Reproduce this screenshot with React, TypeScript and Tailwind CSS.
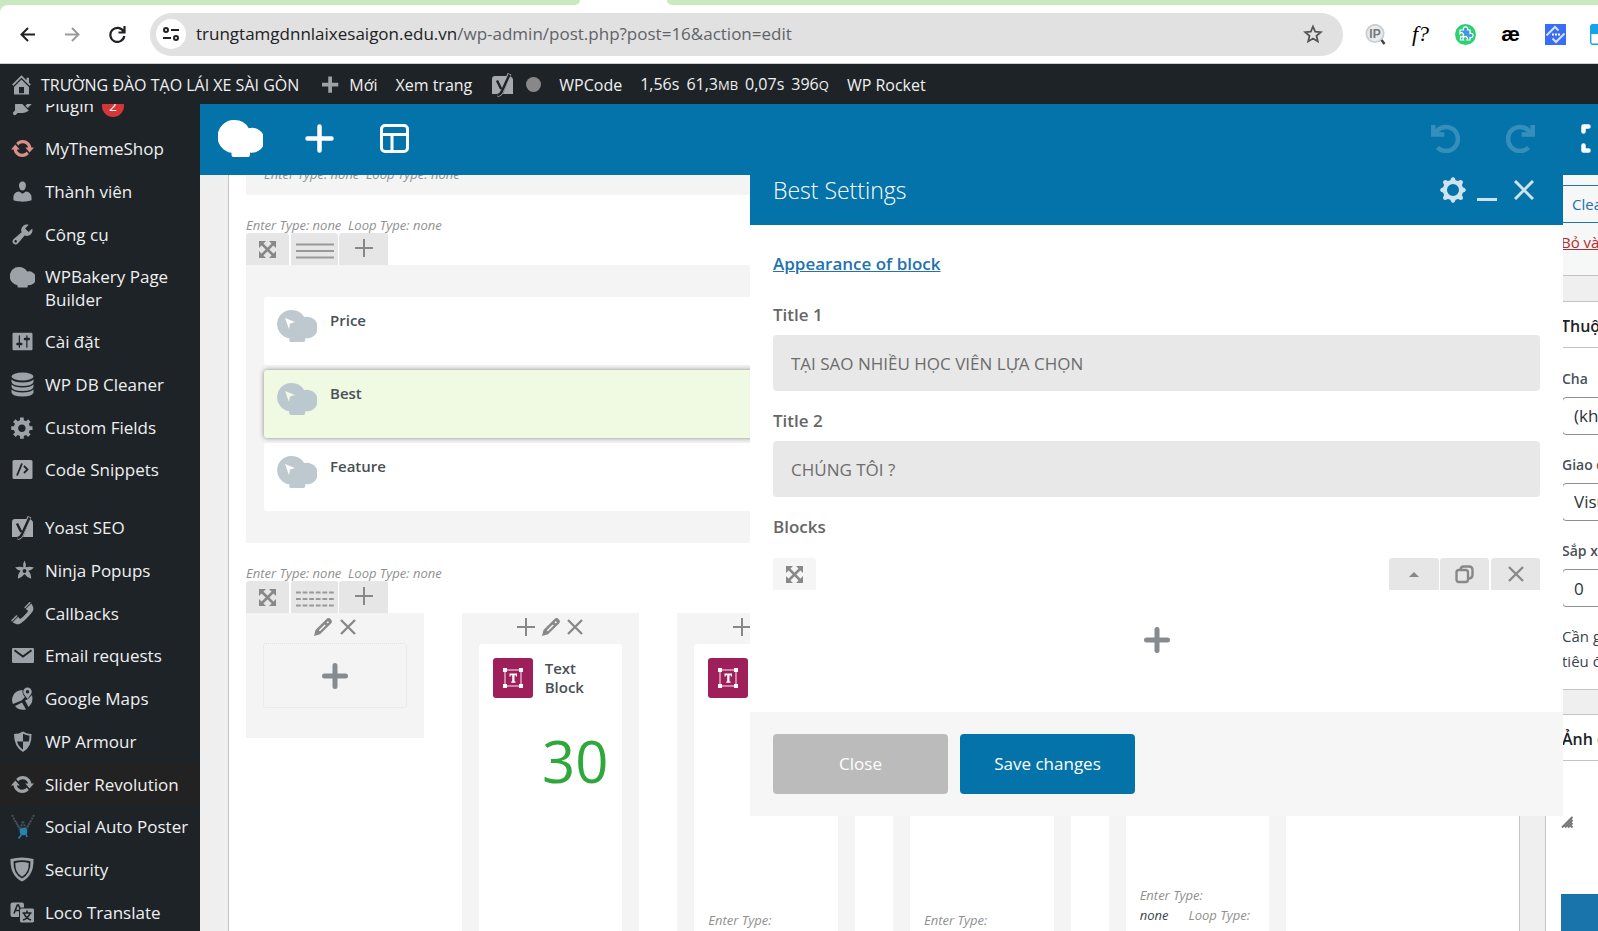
import type { ReactNode } from "react";

type IconProps = { className?: string };

const PATHS = {
  home: "M16 8.5l1.53 1.53-1.06 1.06L10 4.6l-6.47 6.49-1.06-1.06L10 2.5l4 4v-2h2v4zm-6-2.46l6 5.99V18H4v-5.97zM12 17v-5H8v5h4z",
  plus: "M17 8.500v3h-5v5H9v-5H4v-3h5v-5h3v5h5z",
  plugin:
    "M13.11 4.36L9.87 7.6 8 5.73l3.24-3.24c.35-.34 1.05-.2 1.56.32.52.51.66 1.21.31 1.55zm-8 1.77l.91-1.12 9.01 9.01-1.19.84c-.71.71-2.63 1.16-3.82 1.16H6.14L4.9 17.26c-.59.59-1.54.59-2.12 0-.59-.58-.59-1.53 0-2.12l1.24-1.24v-3.88c0-1.13.4-3.19 1.09-3.89zm7.26 3.97l3.24-3.24c.34-.35 1.04-.21 1.55.31.52.51.66 1.21.31 1.55l-3.24 3.25z",
  update:
    "M10.2 3.28c3.53 0 6.43 2.61 6.92 6h2.08l-3.5 4-3.5-4h2.32c-.45-1.97-2.21-3.45-4.32-3.45-1.45 0-2.73.71-3.54 1.78L4.95 5.66C6.23 4.2 8.11 3.28 10.2 3.28zm-.4 13.44c-3.52 0-6.43-2.61-6.92-6H.8l3.5-4c1.17 1.33 2.33 2.67 3.5 4H5.48c.45 1.97 2.21 3.45 4.32 3.45 1.45 0 2.73-.71 3.54-1.78l1.71 1.95c-1.28 1.46-3.15 2.38-5.25 2.38z",
  user: "M10 9.25c-2.27 0-2.73-3.44-2.73-3.44C7 4.02 7.82 2 9.97 2c2.16 0 2.98 2.02 2.71 3.81 0 0-.41 3.44-2.68 3.44zm0 2.57L12.72 10c2.39 0 4.52 2.33 4.52 4.53v2.49s-3.65 1.13-7.24 1.13c-3.65 0-7.24-1.13-7.24-1.13v-2.49c0-2.25 1.94-4.48 4.47-4.48z",
  wrench:
    "M16.68 9.77c-1.34 1.34-3.3 1.67-4.95.99l-5.41 6.52c-.99.99-2.59.99-3.58 0s-.99-2.59 0-3.57l6.52-5.42c-.68-1.65-.35-3.61.99-4.95 1.28-1.28 3.12-1.62 4.72-1.06l-2.89 2.89 2.82 2.82 2.86-2.87c.53 1.58.18 3.39-1.08 4.65zM3.81 16.21c.4.39 1.04.39 1.43 0 .4-.4.4-1.04 0-1.43-.39-.4-1.03-.4-1.43 0-.39.39-.39 1.03 0 1.43z",
  sliders:
    "M18 16V4c0-.55-.45-1-1-1H3c-.55 0-1 .45-1 1v12c0 .55.45 1 1 1h14c.55 0 1-.45 1-1zM8 11h1c.55 0 1 .45 1 1s-.45 1-1 1H8v1.5c0 .28-.22.5-.5.5s-.5-.22-.5-.5V13H6c-.55 0-1-.45-1-1s.45-1 1-1h1V5.5c0-.28.22-.5.5-.5s.5.22.5.5V11zm5-2h-1c-.55 0-1-.45-1-1s.45-1 1-1h1V5.5c0-.28.22-.5.5-.5s.5.22.5.5V7h1c.55 0 1 .45 1 1s-.45 1-1 1h-1v5.5c0 .28-.22.5-.5.5s-.5-.22-.5-.5V9z",
  gear: "M18 12h-2.18c-.17.7-.44 1.35-.81 1.93l1.54 1.54-2.1 2.1-1.54-1.54c-.58.36-1.23.63-1.91.79V19H8v-2.18c-.68-.16-1.33-.43-1.91-.79l-1.54 1.54-2.12-2.12 1.54-1.54c-.36-.58-.63-1.23-.79-1.91H1V9.03h2.17c.16-.7.44-1.35.8-1.94L2.43 5.55l2.1-2.1 1.54 1.54c.58-.37 1.24-.64 1.93-.81V2h3v2.18c.68.16 1.33.43 1.91.79l1.54-1.54 2.12 2.12-1.54 1.54c.36.59.64 1.24.8 1.94H18V12zm-8.5 1.5c1.66 0 3-1.34 3-3s-1.34-3-3-3-3 1.34-3 3 1.34 3 3 3z",
  phone:
    "M12.06 6l-.21-.2c-.52-.54-.43-.79.08-1.3l2.72-2.75c.81-.82.96-1.21 1.73-.48l.21.2zm.53.45l4.4-4.4c.7.94 2.34 3.47 1.53 5.34-.73 1.67-1.09 1.75-2 3-1.85 2.11-4.18 4.37-6 6.07-1.26.91-1.31 1.33-3 2-1.8.71-4.4-.89-5.38-1.56l4.4-4.4 1.18 1.62c.34.46 1.2-.06 1.8-.66 1.04-1.05 3.18-3.18 4-4.07.59-.59 1.12-1.45.66-1.8zM1.57 16.5l-.21-.21c-.68-.74-.29-.9.52-1.7l2.74-2.72c.51-.49.75-.6 1.27-.11l.2.21z",
};

const Dash = ({ name, className = "size-[25px]" }: { name: keyof typeof PATHS; className?: string }) => (
  <svg viewBox="0 0 20 20" className={className} fill="currentColor" aria-hidden="true">
    <path fillRule="evenodd" d={PATHS[name]} />
  </svg>
);

const Clouds = ({ className }: IconProps) => (
  <svg viewBox="0 0 45 37" className={className} fill="currentColor" aria-hidden="true">
    <path d="M16.500 0a16.500 16.500 0 0 1 14.300 8.200A12.500 12.500 0 1 1 32 32.600v2.400a2 2 0 0 1-2 2H15.500a2 2 0 0 1-2-2v-2.200A16.500 16.500 0 0 1 16.500 0z" />
  </svg>
);

const YoastIcon = ({ className = "size-[25px]" }: IconProps) => (
  <svg viewBox="0 0 25 25" className={className} aria-hidden="true">
    <path d="M5 4h12l-6 18H2V7a3 3 0 0 1 3-3zM20 4.500q3 .5 3 3.500v14H13z" fill="#a7aaad" />
    <path d="M7 8.500l4.200 8.500M19.500 1.800L12 19q-1.500 3.800-4.500 4" fill="none" stroke="#a7aaad" strokeWidth="4" />
    <path d="M7 8.500l4.200 8.500M19.500 2.500L12 19q-1.500 3.800-4.500 4" fill="none" stroke="#1d2327" strokeWidth="2.400" />
  </svg>
);

const DatabaseIcon = () => (
  <svg viewBox="0 0 25 25" className="size-[25px]" fill="currentColor" aria-hidden="true">
    <ellipse cx="12.500" cy="4.500" rx="11" ry="4" />
    <path d="M1.500 7.500q3 3 11 3t11-3v2.500q-1 4-11 4t-11-4z" />
    <path d="M1.500 12.500q3 3 11 3t11-3V15q-1 4-11 4t-11-4z" />
    <path d="M1.500 17.500q3 3 11 3t11-3v3q-1 4-11 4t-11-4z" />
  </svg>
);

const CodeIcon = () => (
  <svg viewBox="0 0 25 25" className="size-[25px]" aria-hidden="true">
    <rect x="2.500" y="3" width="20" height="19" rx="1.500" fill="#a7aaad" />
    <path d="M12 6.500L7 18.500M14 9l3.500 3.500L14 16" fill="none" stroke="#1d2327" strokeWidth="1.800" />
  </svg>
);

const NinjaStar = () => (
  <svg viewBox="0 0 25 25" className="size-[25px]" fill="currentColor" aria-hidden="true">
    <path
      fillRule="evenodd"
      d="M14.500 2.500q2 3.500 1.200 6.800Q19.500 8 24 9.500q-2.500 2.700-5.800 3.300 3 2.700 3 8-4.500-1.600-6.700-4.800-2.200 3.200-6.700 4.800 0-5.300 3-8Q7.500 12.200 5 9.500q4.500-1.500 8.300-.2Q12.500 6 14.500 2.500zm0 8.600a1.900 1.900 0 1 0 .01 3.800 1.900 1.900 0 0 0-.01-3.800z"
    />
  </svg>
);

const MailIcon = () => (
  <svg viewBox="0 0 25 25" className="size-[25px]" aria-hidden="true">
    <rect x="2" y="5" width="22" height="15" rx="1.200" fill="#9ca2a7" />
    <path d="M4.500 7.200l8.500 6.300 8.500-6.300" fill="none" stroke="#1d2327" strokeWidth="2" />
  </svg>
);

const MapsIcon = () => (
  <svg viewBox="0 0 25 25" className="size-[25px]" fill="currentColor" aria-hidden="true">
    <path d="M3 10q2-5.500 9.500-6-.5 4 2.500 7l-3.500 3.500L3 18q-2-4 0-8zM5 20l7-3.500 4 7q-7 1.500-11-3.500zM15 14.500l3-1.500 4-4q2 7-3.500 12z" />
    <path fillRule="evenodd" d="M17.500 1.500a4.300 4.300 0 0 1 4.300 4.300c0 2.500-2.500 4.500-4.300 7.200-1.800-2.700-4.300-4.700-4.300-7.200a4.300 4.300 0 0 1 4.300-4.300zm0 2.600a1.700 1.700 0 1 0 .01 3.400 1.700 1.700 0 0 0-.01-3.400z" />
  </svg>
);

const ArmourIcon = () => (
  <svg viewBox="0 0 25 25" className="size-[25px]" aria-hidden="true">
    <path d="M13 2.500q4 2.500 8.500 2.500.5 13-8.500 18Q4 18 4 5q5 0 9-2.500z" fill="#9ca2a7" />
    <path d="M13 4.800q3 1.700 6.500 2 0 3-.7 5.700H13zM13 12.500v8q-4.500-2.600-6-8z" fill="#1d2327" />
  </svg>
);

const SocialIcon = () => (
  <svg viewBox="0 0 25 25" className="size-[25px]" fill="none" aria-hidden="true">
    <path d="M2 1l8 15 3-9 3 9 8-15" stroke="#484f55" strokeWidth="2" strokeDasharray="2 1" />
    <path d="M6 8l5 8M20 8l-4 7" stroke="#3c4a54" strokeWidth="1.500" />
    <circle cx="13.500" cy="17.500" r="3.800" fill="#2783b0" />
    <path d="M8.500 24.500l3-4M16 20l1 3" stroke="#2783b0" strokeWidth="1.500" />
  </svg>
);

const ShieldIcon = () => (
  <svg viewBox="0 0 25 25" className="size-[25px]" aria-hidden="true">
    <path d="M.5 2Q12 -1 23.500 2 24 19 12 24.500 0 19 .5 2z" fill="#9ca2a7" />
    <path d="M3.500 4.300Q12 2 20.500 4.300 21 17 12 21.500 3 17 3.500 4.300z" fill="#1d2327" />
    <path d="M5.300 6Q12 4 18.700 6 19 16 12 19.700 5 16 5.300 6z" fill="#9ca2a7" />
  </svg>
);

const TranslateIcon = () => (
  <svg viewBox="0 0 25 25" className="size-[25px]" aria-hidden="true">
    <rect x=".5" y="2.500" width="13.500" height="14.500" rx="2" fill="#9ca2a7" />
    <path d="M4 13.500L7.300 5h1.200l2.500 6M5.300 10.500h4.500" fill="none" stroke="#1d2327" strokeWidth="1.600" />
    <rect x="9.500" y="8" width="15" height="15" rx="2" fill="#9ca2a7" stroke="#1d2327" />
    <path d="M17 10.500v2M12.500 13h9M14 13.500q2 5 7 6.500M20 13.500q-2 5-7 6.500" fill="none" stroke="#1d2327" strokeWidth="1.600" />
  </svg>
);

const MoveIcon = ({ className = "size-[17px]" }: IconProps) => (
  <svg viewBox="0 0 17 17" className={className} aria-hidden="true">
    <path d="M3 3l11 11M14 3L3 14" stroke="#888" strokeWidth="2.500" />
    <path d="M0 0h7L0 7zM17 0v7L10 0zM0 17v-7L7 17zM17 17h-7l7-7z" fill="#888" />
  </svg>
);

const ThinPlus = () => (
  <svg viewBox="0 0 18 18" className="size-[18px]" aria-hidden="true">
    <path d="M9 0v18M0 9h18" stroke="#888" strokeWidth="2" />
  </svg>
);

const ThinCross = ({ className = "size-[16px]" }: IconProps) => (
  <svg viewBox="0 0 16 16" className={className} aria-hidden="true">
    <path d="M1 1l14 14M15 1L1 15" stroke="currentColor" strokeWidth="2.300" />
  </svg>
);

const Pencil = () => (
  <svg viewBox="0 0 18 18" className="size-[18px]" aria-hidden="true">
    <path
      fillRule="evenodd"
      fill="#888"
      d="M0 18l1.500-6L12.300 1.200a2.500 2.500 0 0 1 4.500 4.500L6 16.200zM4.800 12.200l1.100 1.100 5.800-5.800-1.100-1.100zM12.600 4.400l1.100 1.100 1.300-1.300-1.100-1.100z"
    />
  </svg>
);

const BoldPlus = () => (
  <svg viewBox="0 0 26 26" className="size-[26px]" aria-hidden="true">
    <path d="M13 2.500v21M2.500 13h21" stroke="#858c91" strokeWidth="5" strokeLinecap="round" />
  </svg>
);

const TextBlockIcon = () => (
  <span className="flex size-[40px] shrink-0 items-center justify-center rounded-[3px] bg-[#9f1f5b]">
    <svg viewBox="0 0 20 20" className="size-[20px]" aria-hidden="true">
      <rect x="2" y="2" width="16" height="16" fill="none" stroke="#e0b3c8" strokeWidth="1.400" />
      <path d="M0 0h4v4H0zM16 0h4v4h-4zM0 16h4v4H0zM16 16h4v4h-4z" fill="#fff" />
      <path d="M6.500 5.500h7.500v3h-1.200V7.300h-1.300v6.200h1v1.200H8.200v-1.200h1V7.300H7.700v1.200H6.500z" fill="#fff" />
    </svg>
  </span>
);

function BrowserBar() {
  return (
    <div className="shrink-0 bg-[#cbe9be]">
      <div className="flex h-[5px] bg-white">
        <div className="w-[580px] rounded-br-[5px] bg-[#cbe9be]" />
        <div className="ml-[87px] flex-1 rounded-bl-[5px] bg-[#cbe9be]" />
      </div>
      <div className="flex h-[59px] items-center overflow-hidden rounded-tl-lg border-b border-[#d0d0d0] bg-white pl-5">
        <button aria-label="Back" className="text-[#202124]">
          <svg viewBox="0 0 15 15" className="size-[15px]" fill="none" stroke="currentColor" strokeWidth="2">
            <path d="M15 7.500H1.500M8 1L1.500 7.500 8 14" />
          </svg>
        </button>
        <button aria-label="Forward" className="ml-[30px] text-[#9b9b9b]">
          <svg viewBox="0 0 15 15" className="size-[15px]" fill="none" stroke="currentColor" strokeWidth="2">
            <path d="M0 7.500h13.500M7 1l6.500 6.500L7 14" />
          </svg>
        </button>
        <button aria-label="Reload" className="ml-[29px] text-[#202124]">
          <svg viewBox="0 0 17 17" className="size-[17px]" fill="none" stroke="currentColor" strokeWidth="2.200">
            <path d="M14.500 5.500A7 7 0 1 0 15.300 10M15.500 0v6.500H9.500" />
          </svg>
        </button>
        <div className="ml-6 flex h-[43px] flex-1 items-center rounded-full bg-[#e1e1e1] pl-[6px] pr-[20px]">
          <span className="flex size-[30px] items-center justify-center rounded-full bg-white">
            <svg viewBox="0 0 16 14" className="h-[14px] w-[16px]" fill="none" stroke="#202124" strokeWidth="2">
              <circle cx="3" cy="3" r="2" />
              <path d="M8 3h8M0 11h8" />
              <circle cx="13" cy="11" r="2" />
            </svg>
          </span>
          <span className="ml-[10px] flex-1 whitespace-nowrap text-[17px] leading-6 text-[#202124]">
            trungtamgdnnlaixesaigon.edu.vn<span className="text-[#5f6368]">/wp-admin/post.php?post=16&amp;action=edit</span>
          </span>
          <button aria-label="Bookmark">
            <svg viewBox="0 0 20 20" className="size-[20px]" fill="none" stroke="#555" strokeWidth="1.800">
              <path d="M10 2.500l2.200 5.200 5.600.5-4.300 3.700 1.300 5.500-4.800-2.900-4.800 2.900 1.300-5.500-4.300-3.700 5.600-.5z" />
            </svg>
          </button>
        </div>
        <div className="flex w-[255px] shrink-0 items-center gap-6 overflow-hidden pl-[22px]">
          <span className="flex size-[21px] shrink-0 items-center justify-center">
            <svg viewBox="0 0 21 21" className="size-[21px]">
              <circle cx="10" cy="9.500" r="8.700" fill="#e8eaeb" stroke="#c9ced2" strokeWidth="1.800" />
              <path d="M16.500 16l3 4" stroke="#444" strokeWidth="2.500" />
              <text x="10" y="14" textAnchor="middle" fontSize="12" fontWeight="700" fill="#777" fontFamily="Liberation Sans, sans-serif">
                IP
              </text>
            </svg>
          </span>
          <span className="w-[21px] shrink-0 whitespace-nowrap text-center font-['Liberation_Serif',serif] text-[22px] italic leading-6 text-black">
            f?
          </span>
          <svg viewBox="0 0 21 21" className="size-[21px] shrink-0">
            <circle cx="10.500" cy="10.500" r="10.500" fill="#2fd072" />
            <path
              d="M5 6h3.500a2.200 2.200 0 1 1 4 0H15v3.500a2.200 2.200 0 1 1 0 4V16h-3a2.200 2.200 0 1 0-3.500 0H5.500v-3.500a2 2 0 1 0-.5-3z"
              fill="#4196e0"
              stroke="#fff"
              strokeWidth="1.200"
            />
          </svg>
          <span className="w-[21px] shrink-0 text-center font-['Liberation_Sans',sans-serif] text-[21px] font-bold leading-6 text-black">æ</span>
          <svg viewBox="0 0 21 21" className="size-[21px] shrink-0">
            <rect width="21" height="21" fill="#3a6df5" />
            <path d="M1.500 11.500L10 3l3.500 3.500M19.500 9.500L11 18l-3.500-3.500" fill="none" stroke="#d5e2ff" strokeWidth="2" />
            <path d="M7 10.500h2M10 10.500h2M13 10.500h2" stroke="#fff" strokeWidth="1.800" />
          </svg>
          <svg viewBox="0 0 21 21" className="size-[21px] shrink-0">
            <rect x=".7" y=".7" width="19.600" height="19.600" rx="2" fill="#fff" stroke="#12a5ee" strokeWidth="1.400" />
            <path d="M1 1h19v9H1z" fill="#12a5ee" />
          </svg>
        </div>
      </div>
    </div>
  );
}

function AdminBar() {
  return (
    <header className="flex h-10 shrink-0 items-center whitespace-nowrap bg-[#1d2327] pl-[9px] pt-px text-[16px] leading-6 text-[#f0f0f1]">
      <a href="#home" className="flex items-center gap-[7px]">
        <Dash name="home" className="size-[25px] text-[#9ca2a7]" />
        TRƯỜNG ĐÀO TẠO LÁI XE SÀI GÒN
      </a>
      <a href="#new" className="ml-[18px] flex items-center gap-[7px]">
        <Dash name="plus" className="size-[25px] text-[#9ca2a7]" />
        Mới
      </a>
      <a href="#view" className="ml-[18px]">
        Xem trang
      </a>
      <a href="#yoast" aria-label="Yoast SEO" className="ml-[18px] flex items-center gap-[11px]">
        <YoastIcon />
        <span className="size-[15px] rounded-full bg-[#888]" />
      </a>
      <a href="#wpcode" className="ml-[18px]">
        WPCode
      </a>
      <a href="#stats" className="ml-[18px] flex items-baseline gap-[7px]">
        <span>1,56s</span>
        <span>
          61,3<span className="text-[13px]">MB</span>
        </span>
        <span>0,07s</span>
        <span>
          396<span className="text-[13px]">Q</span>
        </span>
      </a>
      <a href="#rocket" className="ml-[18px]">
        WP Rocket
      </a>
    </header>
  );
}

type MenuEntry = { label: ReactNode; icon: ReactNode; row?: string };

const MENU: MenuEntry[] = [
  {
    label: (
      <span className="flex items-center gap-2">
        Plugin
        <span className="flex size-[22px] items-center justify-center rounded-full bg-[#d63638] text-[14px] text-white">2</span>
      </span>
    ),
    icon: <Dash name="plugin" />,
  },
  {
    label: "MyThemeShop",
    icon: <Dash name="update" className="size-[25px] text-[#dc8f89]" />,
  },
  { label: "Thành viên", icon: <Dash name="user" /> },
  { label: "Công cụ", icon: <Dash name="wrench" /> },
  {
    label: (
      <>
        WPBakery Page
        <br />
        Builder
      </>
    ),
    icon: <Clouds className="mb-5 w-[25px]" />,
    row: "h-[65px]",
  },
  { label: "Cài đặt", icon: <Dash name="sliders" /> },
  { label: "WP DB Cleaner", icon: <DatabaseIcon /> },
  { label: "Custom Fields", icon: <Dash name="gear" /> },
  { label: "Code Snippets", icon: <CodeIcon />, row: "mb-[15px] h-[43px]" },
  { label: "Yoast SEO", icon: <YoastIcon /> },
  { label: "Ninja Popups", icon: <NinjaStar /> },
  { label: "Callbacks", icon: <Dash name="phone" /> },
  { label: "Email requests", icon: <MailIcon /> },
  { label: "Google Maps", icon: <MapsIcon /> },
  { label: "WP Armour", icon: <ArmourIcon /> },
  {
    label: "Slider Revolution",
    icon: <Dash name="update" />,
    row: "h-[42px] bg-[#222222]",
  },
  { label: "Social Auto Poster", icon: <SocialIcon /> },
  { label: "Security", icon: <ShieldIcon /> },
  { label: "Loco Translate", icon: <TranslateIcon /> },
];

function Sidebar() {
  return (
    <nav className="w-[200px] shrink-0 overflow-hidden bg-[#1d2327]">
      <ul className="-mt-5">
        {MENU.map((item, i) => (
          <li key={i} className={item.row ?? "h-[43px] nth-[4n]:h-[42px]"}>
            <a href="#menu" className="flex h-full items-center whitespace-nowrap pl-[10px] text-[17px] leading-[23px] text-[#f0f0f1]">
              <span className="flex w-[35px] shrink-0 text-[#9ca2a7]">{item.icon}</span>
              {typeof item.label === "string" ? item.label : <span>{item.label}</span>}
            </a>
          </li>
        ))}
      </ul>
    </nav>
  );
}

function BuilderNav() {
  return (
    <div className="flex h-[71px] shrink-0 items-center overflow-hidden bg-[#0473aa] pb-[3px] pl-[18px] text-white">
      <Clouds className="h-[37px] w-[45px] shrink-0" />
      <button aria-label="Add element" className="ml-[42px]">
        <svg viewBox="0 0 29 29" className="size-[29px]" stroke="currentColor" strokeWidth="4.500" strokeLinecap="round">
          <path d="M14.500 2.500v24M2.500 14.500h24" />
        </svg>
      </button>
      <button aria-label="Templates" className="ml-[46px]">
        <svg viewBox="0 0 29 29" className="size-[29px]" fill="none" stroke="currentColor" strokeWidth="3">
          <rect x="1.500" y="1.500" width="26" height="26" rx="3.500" />
          <path d="M1.500 10.500h26M12 10.500v17" />
        </svg>
      </button>
      <div className="ml-auto flex shrink-0 items-center gap-[46px]">
        <button aria-label="Undo" className="opacity-20">
          <svg viewBox="0 0 29 29" className="size-[29px]" fill="none" stroke="currentColor" strokeWidth="4.500">
            <path d="M2.300 1v9.500h11M4 10A12 12 0 1 1 6.500 23.500" />
          </svg>
        </button>
        <button aria-label="Redo" className="opacity-20">
          <svg viewBox="0 0 29 29" className="size-[29px]" fill="none" stroke="currentColor" strokeWidth="4.500">
            <path d="M26.700 1v9.500h-11M25 10A12 12 0 1 0 22.500 23.500" />
          </svg>
        </button>
        <button aria-label="Full screen" className="-mr-[12px]">
          <svg viewBox="0 0 29 29" className="size-[29px]" fill="none" stroke="currentColor" strokeWidth="4.500" strokeLinecap="round" strokeLinejoin="round">
            <path d="M2.500 7.500v-5h5M21.500 2.500h5v5M26.500 21.500v5h-5M7.500 26.500h-5v-5" />
          </svg>
        </button>
      </div>
    </div>
  );
}

const TypeLabel = () => (
  <p className="whitespace-pre text-[13px] italic leading-4 text-[#909090]">Enter Type: none  Loop Type: none</p>
);

function RowTabs({ dashed = false }: { dashed?: boolean }) {
  return (
    <div className="flex h-8">
      <button aria-label="Move row" className="mr-[2px] flex w-[43px] items-center justify-center rounded-t-[3px] bg-[#e6e6e6]">
        <MoveIcon />
      </button>
      <button aria-label="Row layout" className="mr-px flex w-[47px] items-center justify-center rounded-t-[3px] bg-[#e6e6e6]">
        <svg viewBox="0 0 38 16" className="mt-1 h-[16px] w-[38px]" aria-hidden="true">
          <path d="M0 1.500h38M0 8h38M0 14.500h38" stroke="#999" strokeWidth="2" strokeDasharray={dashed ? "4.800 1.800" : undefined} />
        </svg>
      </button>
      <button aria-label="Add column" className="flex w-[49px] items-center justify-center rounded-t-[3px] bg-[#e6e6e6] pb-[3px]">
        <ThinPlus />
      </button>
    </div>
  );
}

function ElementRow({ name, active = false }: { name: string; active?: boolean }) {
  return (
    <div
      className={
        active
          ? "flex h-[68px] rounded-[3px] bg-[#f0fae2] pl-[13px] pt-[13px] shadow-[0_0_5px_rgba(0,0,0,0.45)]"
          : "flex h-[68px] rounded-[3px] bg-white pl-[13px] pt-[13px]"
      }
    >
      <span className={active ? "relative h-8 w-10 text-[#bcc8cf]" : "relative h-8 w-10 text-[#bdc9cf]"}>
        <Clouds className="h-8 w-10" />
        <svg viewBox="0 0 10 11" className="absolute left-2 top-2 h-[11px] w-[10px]" fill={active ? "#f0fae2" : "#fff"}>
          <path d="M0 0l10 4-5 1.500L4 11z" />
        </svg>
      </span>
      <span className="ml-[13px] text-[15px] font-semibold leading-5 text-[#4a5056]">{name}</span>
    </div>
  );
}

function BuilderColumns() {
  return (
    <div className="grid flex-1 grid-cols-6 gap-[38px]">
      <div className="flex h-[125px] flex-col bg-[#f4f4f4] px-[17px]">
        <div className="flex h-[30px] items-center justify-center gap-2 pb-[2px] text-[#888]">
          <button aria-label="Edit column"><Pencil /></button>
          <button aria-label="Delete column"><ThinCross /></button>
        </div>
        <button aria-label="Add element" className="flex h-[65px] items-center justify-center rounded-[3px] border border-dotted border-[#e0e0e0]">
          <BoldPlus />
        </button>
      </div>
      <div className="flex flex-col bg-[#f4f4f4] px-[17px]">
        <div className="flex h-[31px] items-center justify-center gap-[7px] pb-[3px] text-[#888]">
          <button aria-label="Add element"><ThinPlus /></button>
          <button aria-label="Edit column"><Pencil /></button>
          <button aria-label="Delete column"><ThinCross /></button>
        </div>
        <div className="flex-1 rounded-t-[3px] bg-white px-[14px] pt-[14px]">
          <div className="flex gap-[12px]">
            <TextBlockIcon />
            <span className="pt-px text-[15px] font-semibold leading-[19px] text-[#4a5056]">
              Text
              <br />
              Block
            </span>
          </div>
          <p className="mt-[33px] text-right text-[58px] leading-[60px] text-[#2ea83a]">30</p>
        </div>
      </div>
      <div className="flex flex-col bg-[#f4f4f4] px-[17px]">
        <div className="flex h-[31px] items-center pb-[3px] pl-[39px]">
          <button aria-label="Add element"><ThinPlus /></button>
        </div>
        <div className="flex-1 rounded-t-[3px] bg-white px-[14px] pt-[14px]">
          <TextBlockIcon />
          <p className="mt-[212px] whitespace-nowrap text-[13px] italic leading-5 text-[#909090]">Enter Type:</p>
        </div>
      </div>
      <div className="bg-[#f4f4f4] px-[17px]">
        <div className="h-full bg-white px-[14px] pt-[297px]">
          <p className="whitespace-nowrap text-[13px] italic leading-5 text-[#909090]">Enter Type:</p>
        </div>
      </div>
      <div className="bg-[#f4f4f4] px-[17px]">
        <div className="h-full bg-white px-[14px] pt-[272px] text-[13px] italic leading-5 text-[#909090]">
          <p className="whitespace-nowrap">Enter Type:</p>
          <p className="flex gap-5 whitespace-nowrap">
            <span className="text-[#3c434a]">none</span>
            <span>Loop Type:</span>
          </p>
        </div>
      </div>
    </div>
  );
}

function BuilderCanvas() {
  return (
    <main className="ml-[28px] mr-[25px] flex min-w-0 flex-1 flex-col overflow-hidden border-x border-[#c3c4c7] bg-white px-[17px]">
      <div className="-mt-[9px] h-[29px] shrink-0 bg-[#f4f4f4] pl-[18px]">
        <TypeLabel />
      </div>
      <div className="mt-[22px] shrink-0">
        <TypeLabel />
        <RowTabs />
        <div className="flex h-[278px] flex-col gap-[5px] bg-[#f4f4f4] py-8 pl-[18px]">
          <ElementRow name="Price" />
          <ElementRow name="Best" active />
          <ElementRow name="Feature" />
        </div>
      </div>
      <div className="mt-[22px] flex h-[500px] shrink-0 flex-col">
        <TypeLabel />
        <RowTabs dashed />
        <BuilderColumns />
      </div>
    </main>
  );
}

function SettingsColumn() {
  const label = "block text-[14px] font-semibold leading-5 text-[#4a5056]";
  const field = "mt-2 block h-[38px] w-[300px] appearance-none rounded-[4px] border border-[#8c8f94] bg-white pl-[11px] text-[17px] text-[#2c3338]";
  return (
    <aside className="w-[53px] shrink-0 overflow-hidden border-l border-[#c3c4c7] bg-white">
      <div className="w-[330px] whitespace-nowrap">
        <div className="h-[101px] border-b border-[#c3c4c7] bg-[#f6f7f7] pl-[15px] pt-[10px]">
          <button className="block h-[38px] rounded-[3px] border border-[#2271b1] px-[10px] text-[15px] text-[#2271b1]">Clear</button>
          <a href="#trash" className="mt-2 block text-[15px] leading-[22px] text-[#b32d2e] underline">
            Bỏ vào thùng rác
          </a>
        </div>
        <div className="h-[25px] bg-[#efefef]" />
        <section className="border-y border-[#c3c4c7]">
          <h2 className="h-[46px] border-b border-[#c3c4c7] pl-[15px] pt-3 text-[16px] font-semibold leading-[24px] text-[#1d2327]">Thuộc tính</h2>
          <div className="h-[341px] pl-4 pt-[21px]">
            <label htmlFor="parent" className={label}>Cha</label>
            <select id="parent" className={field}>
              <option>(không có)</option>
            </select>
            <label htmlFor="template" className="mt-[20px] block text-[14px] font-semibold leading-5 text-[#4a5056]">Giao diện</label>
            <select id="template" className={field}>
              <option>Visual</option>
            </select>
            <label htmlFor="order" className="mt-[20px] block text-[14px] font-semibold leading-5 text-[#4a5056]">Sắp xếp</label>
            <input id="order" defaultValue="0" className={field} />
            <p className="mt-[17px] text-[15px] leading-[25px] text-[#3c434a]">
              Cần giúp
              <br />
              tiêu đề
            </p>
          </div>
        </section>
        <div className="h-[24px] bg-[#efefef]" />
        <section className="border-t border-[#c3c4c7]">
          <h2 className="h-[46px] border-b border-[#c3c4c7] pl-4 pt-3 text-[16px] font-semibold leading-[24px] text-[#1d2327]">Ảnh đại diện</h2>
          <div className="h-[133px] pl-[15px] pt-[55px]">
            <svg viewBox="0 0 12 12" className="size-[12px]" stroke="#777" strokeWidth="2">
              <path d="M1 11.500L11.500 1M4 11.500L11.500 4M7 11.500L11.500 7M10 11.500l1.500-1.500" />
            </svg>
          </div>
          <div className="ml-[15px] h-[60px] bg-[#1874ab]" />
        </section>
      </div>
    </aside>
  );
}

function SettingsDialog() {
  const input = "mt-2 block h-14 w-full rounded-[4px] bg-[#e8e8e8] px-[18px] text-[17px] text-[#6c6c6c]";
  const label = "mt-[18px] block text-[17px] font-semibold leading-6 text-[#666]";
  return (
    <div role="dialog" aria-label="Best Settings" className="absolute right-[35px] top-0 w-[813px] bg-white">
      <div className="flex h-[50px] items-start bg-[#0473aa] px-[23px]">
        <h1 className="flex-1 text-[23px] font-light leading-[30px] text-white">Best Settings</h1>
        <div className="mr-[6px] flex items-center text-[#cfe3ee]">
          <button aria-label="Settings" className="mt-[2px]">
            <svg viewBox="0 0 26 26" className="size-[26px]" aria-hidden="true">
              <path
                fill="currentColor"
                fillRule="evenodd"
                d="M13 0q2 .5 2.700 3.200L18 4.100 20.500 3q2.500 0 2.500 2.500L21.900 8l.9 2.300Q25.500 11 26 13q-.5 2-3.200 2.700l-.9 2.300 1.100 2.500q0 2.500-2.500 2.500L18 21.900l-2.300.9Q15 25.500 13 26q-2-.5-2.700-3.200L8 21.900 5.500 23Q3 23 3 20.500L4.100 18l-.9-2.300Q.5 15 0 13q.5-2 3.200-2.700L4.100 8 3 5.500Q3 3 5.500 3L8 4.100l2.300-.9Q11 .5 13 0zM13 7a6 6 0 1 0 .01 12A6 6 0 0 0 13 7z"
              />
            </svg>
          </button>
          <button aria-label="Minimize" className="ml-[11px] pt-5">
            <span className="block h-[3px] w-[20px] bg-[#cfe3ee]" />
          </button>
          <button aria-label="Close dialog" className="ml-[17px] pt-[2px]">
            <svg viewBox="0 0 20 20" className="size-[20px]" stroke="currentColor" strokeWidth="3">
              <path d="M1 1l18 18M19 1L1 19" />
            </svg>
          </button>
        </div>
      </div>
      <form className="px-[23px] pt-[27px]" onSubmit={(e) => e.preventDefault()}>
        <a href="#appearance" className="mb-[27px] block w-fit text-[17px] font-semibold leading-6 text-[#2271b1] underline">
          Appearance of block
        </a>
        <label htmlFor="title1" className="block text-[17px] font-semibold leading-6 text-[#666]">Title 1</label>
        <input id="title1" defaultValue="TẠI SAO NHIỀU HỌC VIÊN LỰA CHỌN" className={input} />
        <label htmlFor="title2" className={label}>Title 2</label>
        <input id="title2" defaultValue="CHÚNG TÔI ?" className={input} />
        <p className={label}>Blocks</p>
        <div className="mt-[19px] flex h-8">
          <button type="button" aria-label="Move block" className="mr-auto flex w-[43px] items-center justify-center rounded-t-[3px] bg-[#f5f5f5]">
            <MoveIcon />
          </button>
          <button type="button" aria-label="Collapse block" className="mr-px flex w-[50px] items-center justify-center rounded-t-[3px] bg-[#e6e6e6]">
            <svg viewBox="0 0 10 5" className="h-[5px] w-[10px]" fill="#888"><path d="M5 0l5 5H0z" /></svg>
          </button>
          <button type="button" aria-label="Duplicate block" className="mr-[2px] flex w-[49px] items-center justify-center rounded-t-[3px] bg-[#e6e6e6]">
            <svg viewBox="0 0 19 19" className="size-[19px]" fill="none" stroke="#888" strokeWidth="2.400">
              <rect x="1.500" y="5" width="11.500" height="12" rx="2.500" />
              <path d="M5.500 4.500q.5-3 3-3H14q3.500 0 3.500 3.500v5q0 3-3.500 3.500" />
            </svg>
          </button>
          <button type="button" aria-label="Remove block" className="flex w-[49px] items-center justify-center rounded-t-[3px] bg-[#e6e6e6] text-[#888]">
            <ThinCross />
          </button>
        </div>
        <div className="flex h-[122px] justify-center pb-[22px]">
          <button type="button" aria-label="Add block element"><BoldPlus /></button>
        </div>
      </form>
      <div className="flex gap-3 bg-[#f6f6f6] px-[23px] pb-[22px] pt-[22px] text-[17px] text-white">
        <button className="h-[60px] w-[175px] rounded-[4px] bg-[#bbb]">Close</button>
        <button className="h-[60px] w-[175px] rounded-[4px] bg-[#0473aa]">Save changes</button>
      </div>
    </div>
  );
}

export default function App() {
  return (
    <div className="flex h-screen flex-col overflow-hidden bg-[#efefef] font-['Open_Sans','Noto_Sans',sans-serif]">
      <BrowserBar />
      <AdminBar />
      <div className="flex min-h-0 flex-1">
        <Sidebar />
        <div className="flex min-w-0 flex-1 flex-col">
          <BuilderNav />
          <div className="relative flex min-h-0 flex-1">
            <BuilderCanvas />
            <SettingsColumn />
            <SettingsDialog />
          </div>
        </div>
      </div>
    </div>
  );
}
